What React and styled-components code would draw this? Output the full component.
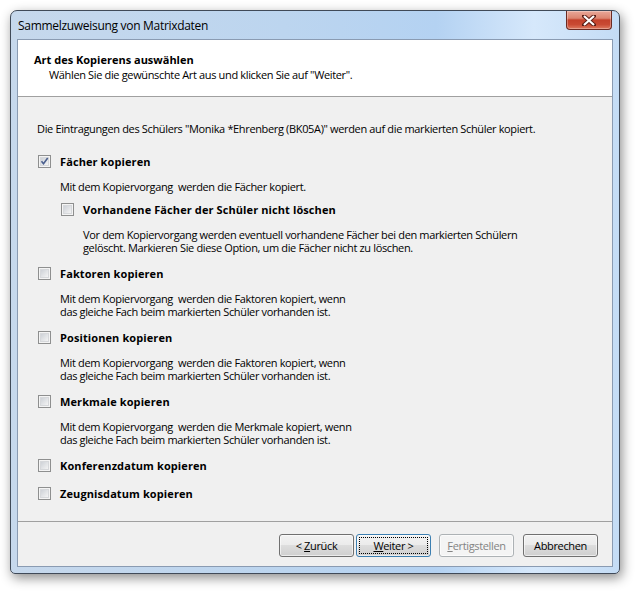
import React from 'react'
import styled, { createGlobalStyle } from 'styled-components'

const GlobalStyle = createGlobalStyle`
  html, body {
    margin: 0;
    padding: 0;
    background: #ffffff;
  }
  body {
    font-family: "Open Sans", "Noto Sans", sans-serif;
    font-size: 11px;
    letter-spacing: -0.35px;
    color: #000;
  }
`

const Page = styled.div`
  width: 638px;
  height: 593px;
  padding: 10px 0 0 10px;
  box-sizing: border-box;
`

const Window = styled.div`
  width: 610px;
  height: 564px;
  box-sizing: border-box;
  border: 1px solid #404a58;
  border-radius: 7px 7px 5px 5px;
  background: linear-gradient(90deg, #c6d8ec 0%, #bcd5ef 45%, #b4d2f2 70%, #d6e8fb 86%, #c4dcf5 100%);
  box-shadow: 2px 4px 12px rgba(0, 0, 0, 0.45);
  display: flex;
  flex-direction: column;
  padding: 0 6px 6px 6px;
`

const TitleBar = styled.div`
  height: 28px;
  display: flex;
  align-items: flex-start;
  justify-content: space-between;
`

const TitleText = styled.div`
  padding: 6px 0 0 1px;
  font-size: 12px;
  letter-spacing: -0.3px;
  color: #000;
`

const CloseButton = styled.div`
  width: 44px;
  height: 18px;
  margin-right: 1px;
  border: 1px solid #6b2a22;
  border-top: none;
  border-radius: 0 0 4px 4px;
  background: linear-gradient(180deg, #e9a899 0%, #dc8570 40%, #c4412b 50%, #c94a33 75%, #de7a60 100%);
  display: flex;
  align-items: center;
  justify-content: center;
  box-shadow: inset 0 0 0 1px rgba(255, 255, 255, 0.3);
`

const Client = styled.div`
  flex: 1;
  display: flex;
  flex-direction: column;
  border: 1px solid #8a9bb2;
  background: #f0f0f0;
`

const Header = styled.div`
  height: 57px;
  background: #ffffff;
  border-bottom: 1px solid #a0a0a0;
  padding: 12px 0 0 16px;
  box-sizing: border-box;
`

const HeaderTitle = styled.div`
  font-weight: bold;
  letter-spacing: 0;
  line-height: 15px;
`

const HeaderSub = styled.div`
  line-height: 15px;
  padding-left: 15px;
`

const Body = styled.div`
  flex: 1;
  padding: 24px 0 0 19px;
  display: flex;
  flex-direction: column;
  border-bottom: 1px solid #a0a0a0;
`

const Intro = styled.div`
  line-height: 16px;
  margin-bottom: 16px;
`

const Group = styled.div`
  margin-bottom: ${(p) => p.$gap}px;
`

const OptionRow = styled.label`
  display: flex;
  align-items: center;
  height: 16px;
  gap: 9px;
  margin-left: ${(p) => (p.$indent ? 24 : 1)}px;
  font-weight: bold;
  letter-spacing: 0.1px;
`

const Desc = styled.div`
  margin: 11px 0 ${(p) => p.$after || 0}px ${(p) => (p.$indent ? 46 : 23)}px;
  line-height: 13px;
`

const Footer = styled.div`
  height: 44px;
  display: flex;
  justify-content: flex-end;
  align-items: flex-start;
  padding: 12px 14px 0 0;
  box-sizing: border-box;
`

const Button = styled.div`
  width: 75px;
  height: 23px;
  box-sizing: border-box;
  margin-left: ${(p) => p.$gap}px;
  border: 1px solid ${(p) => (p.$disabled ? '#adb2b5' : p.$focus ? '#3c7fb1' : '#707070')};
  border-radius: 3px;
  background: ${(p) =>
    p.$disabled
      ? '#f4f4f4'
      : 'linear-gradient(180deg, #f2f2f2 0%, #ebebeb 50%, #dddddd 50%, #cfcfcf 100%)'};
  color: ${(p) => (p.$disabled ? '#838383' : '#000')};
  display: flex;
  align-items: center;
  justify-content: center;
  position: relative;
  box-shadow: inset 0 0 0 1px rgba(255, 255, 255, 0.6);

  u {
    text-decoration: underline;
  }
`

const FocusRing = styled.div`
  position: absolute;
  inset: 2px;
  border: 1px dotted #000;
`

const Checkbox = ({ checked }) => (
  <svg width="13" height="13" viewBox="0 0 13 13">
    <defs>
      <linearGradient id="cbfill" x1="0" y1="0" x2="1" y2="1">
        <stop offset="0" stopColor="#cbcfd5" />
        <stop offset="1" stopColor="#f6f6f6" />
      </linearGradient>
    </defs>
    <rect x="0.5" y="0.5" width="12" height="12" fill="#f4f4f4" stroke="#8e8f8f" />
    <rect x="2.5" y="2.5" width="8" height="8" fill="url(#cbfill)" stroke="#d6d8db" />
    {checked && (
      <path d="M3.5 6.2 L5.5 8.7 L9.7 3" fill="none" stroke="#4a5f8e" strokeWidth="1.6" />
    )}
  </svg>
)

const Option = ({ label, checked, indent }) => (
  <OptionRow $indent={indent}>
    <Checkbox checked={checked} />
    <span>{label}</span>
  </OptionRow>
)

const App = () => {
  return (
    <Page>
      <GlobalStyle />
      <Window>
        <TitleBar>
          <TitleText>Sammelzuweisung von Matrixdaten</TitleText>
          <CloseButton>
            <svg width="14" height="11" viewBox="0 0 14 11">
              <path d="M2 1 L12 10 M12 1 L2 10" stroke="#5a1e16" strokeWidth="4" strokeLinecap="square" />
              <path d="M2 1 L12 10 M12 1 L2 10" stroke="#ffffff" strokeWidth="2.2" />
            </svg>
          </CloseButton>
        </TitleBar>
        <Client>
          <Header>
            <HeaderTitle>Art des Kopierens auswählen</HeaderTitle>
            <HeaderSub>Wählen Sie die gewünschte Art aus und klicken Sie auf "Weiter".</HeaderSub>
          </Header>
          <Body>
            <Intro>
              Die Eintragungen des Schülers "Monika *Ehrenberg (BK05A)" werden auf die markierten Schüler kopiert.
            </Intro>
            <Group $gap={11}>
              <Option label="Fächer kopieren" checked />
              <Desc $after={8}>Mit dem Kopiervorgang&nbsp; werden die Fächer kopiert.</Desc>
              <Option label="Vorhandene Fächer der Schüler nicht löschen" indent />
              <Desc $indent>
                Vor dem Kopiervorgang werden eventuell vorhandene Fächer bei den markierten Schülern
                <br />
                gelöscht. Markieren Sie diese Option, um die Fächer nicht zu löschen.
              </Desc>
            </Group>
            <Group $gap={11}>
              <Option label="Faktoren kopieren" />
              <Desc>
                Mit dem Kopiervorgang&nbsp; werden die Faktoren kopiert, wenn
                <br />
                das gleiche Fach beim markierten Schüler vorhanden ist.
              </Desc>
            </Group>
            <Group $gap={11}>
              <Option label="Positionen kopieren" />
              <Desc>
                Mit dem Kopiervorgang&nbsp; werden die Faktoren kopiert, wenn
                <br />
                das gleiche Fach beim markierten Schüler vorhanden ist.
              </Desc>
            </Group>
            <Group $gap={11}>
              <Option label="Merkmale kopieren" />
              <Desc>
                Mit dem Kopiervorgang&nbsp; werden die Merkmale kopiert, wenn
                <br />
                das gleiche Fach beim markierten Schüler vorhanden ist.
              </Desc>
            </Group>
            <Group $gap={12}>
              <Option label="Konferenzdatum kopieren" />
            </Group>
            <Group $gap={0}>
              <Option label="Zeugnisdatum kopieren" />
            </Group>
          </Body>
          <Footer>
            <Button $gap={0}>
              &lt;&nbsp;<u>Z</u>urück
            </Button>
            <Button $gap={2} $focus>
              <FocusRing />
              <u>W</u>eiter&nbsp;&gt;
            </Button>
            <Button $gap={8} $disabled>
              <u>F</u>ertigstellen
            </Button>
            <Button $gap={9}>Abbrechen</Button>
          </Footer>
        </Client>
      </Window>
    </Page>
  )
}

export default App
